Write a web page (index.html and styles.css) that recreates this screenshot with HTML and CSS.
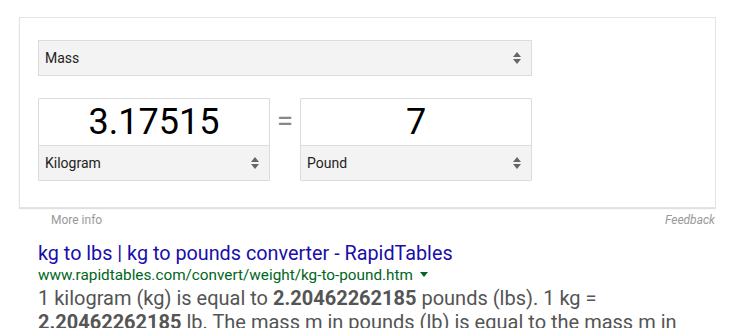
FILE: index.html
```html
<!DOCTYPE html>
<html lang="en">
<head>
  <meta charset="UTF-8" />
  <title>kg to lbs</title>
  <link rel="stylesheet" href="styles.css">
</head>
<body>
  <div class="converter">
    <div class="select wide">
      <span>Mass</span>
      <span class="arrows"><svg width="8" height="12" viewBox="0 0 8 12"><path d="M4 0L8 5H0z M0 7H8L4 12z" fill="#666"/></svg></span>
    </div>
    <div class="row">
      <div class="unit-box">
        <div class="value">3.17515</div>
        <div class="select">
          <span>Kilogram</span>
          <span class="arrows"><svg width="8" height="12" viewBox="0 0 8 12"><path d="M4 0L8 5H0z M0 7H8L4 12z" fill="#666"/></svg></span>
        </div>
      </div>
      <div class="equals">=</div>
      <div class="unit-box">
        <div class="value">7</div>
        <div class="select">
          <span>Pound</span>
          <span class="arrows"><svg width="8" height="12" viewBox="0 0 8 12"><path d="M4 0L8 5H0z M0 7H8L4 12z" fill="#666"/></svg></span>
        </div>
      </div>
    </div>
  </div>
  <div class="card-footer">
    <a href="#" class="more">More info</a>
    <a href="#" class="feedback">Feedback</a>
  </div>

  <div class="result">
    <a href="#" class="title">kg to lbs | kg to pounds converter - RapidTables</a>
    <div class="url">www.rapidtables.com/convert/weight/kg-to-pound.htm <svg class="caret" width="8" height="5" viewBox="0 0 8 5"><path d="M0 0H8L4 5z" fill="#006621"/></svg></div>
    <p class="snippet">1 kilogram (kg) is equal to <b>2.20462262185</b> pounds (lbs). 1 kg = <b>2.20462262185</b> lb. The mass m in pounds (lb) is equal to the mass m in kilograms (kg) divided by 0.45359237.</p>
  </div>
</body>
</html>
```

FILE: styles.css
```css
body {
  margin: 0;
  padding: 17px 0 0 19px;
  font-family: Roboto, Arial, sans-serif;
  background: #fff;
  width: 697px;
  height: 311px;
  overflow: hidden;
}
.converter {
  border: 1px solid #e4e4e4;
  box-shadow: 0 1px 1px rgba(0, 0, 0, 0.12);
  padding: 22px 18px 26px 18px;
}
.select {
  display: flex;
  justify-content: space-between;
  align-items: center;
  background-color: #f3f3f3;
  font-size: 14px;
  color: #222;
  padding: 0 10px 0 6px;
  height: 34px;
}
.select.wide {
  width: 476px;
  border: 1px solid #dcdcdc;
}
.arrows svg {
  display: block;
}
.row {
  display: flex;
  align-items: flex-start;
  margin-top: 22px;
}
.unit-box {
  width: 230px;
  border: 1px solid #dcdcdc;
  border-radius: 1px;
}
.value {
  height: 46px;
  text-align: center;
  font-size: 36px;
  line-height: 46px;
  color: #000;
  border-bottom: 1px solid #dcdcdc;
}
.equals {
  width: 30px;
  text-align: center;
  font-size: 30px;
  color: #888;
  line-height: 46px;
}
.card-footer {
  display: flex;
  justify-content: space-between;
  padding: 5px 1px 0 32px;
  font-size: 12px;
}
.card-footer a {
  color: #999;
  text-decoration: none;
}
.card-footer .feedback {
  font-style: italic;
}
.result {
  padding: 15px 0 0 19px;
}
.title {
  font-size: 19.8px;
  color: #1a0dab;
  text-decoration: none;
  line-height: 24px;
}
.url {
  font-size: 15.3px;
  color: #006621;
  line-height: 19px;
}
.caret {
  margin-left: 3px;
  vertical-align: 3px;
}
.snippet {
  margin: 1px 0 0;
  font-size: 20px;
  color: #545454;
  line-height: 24px;
  width: 640px;
}
.snippet b {
  color: #555;
}
```
